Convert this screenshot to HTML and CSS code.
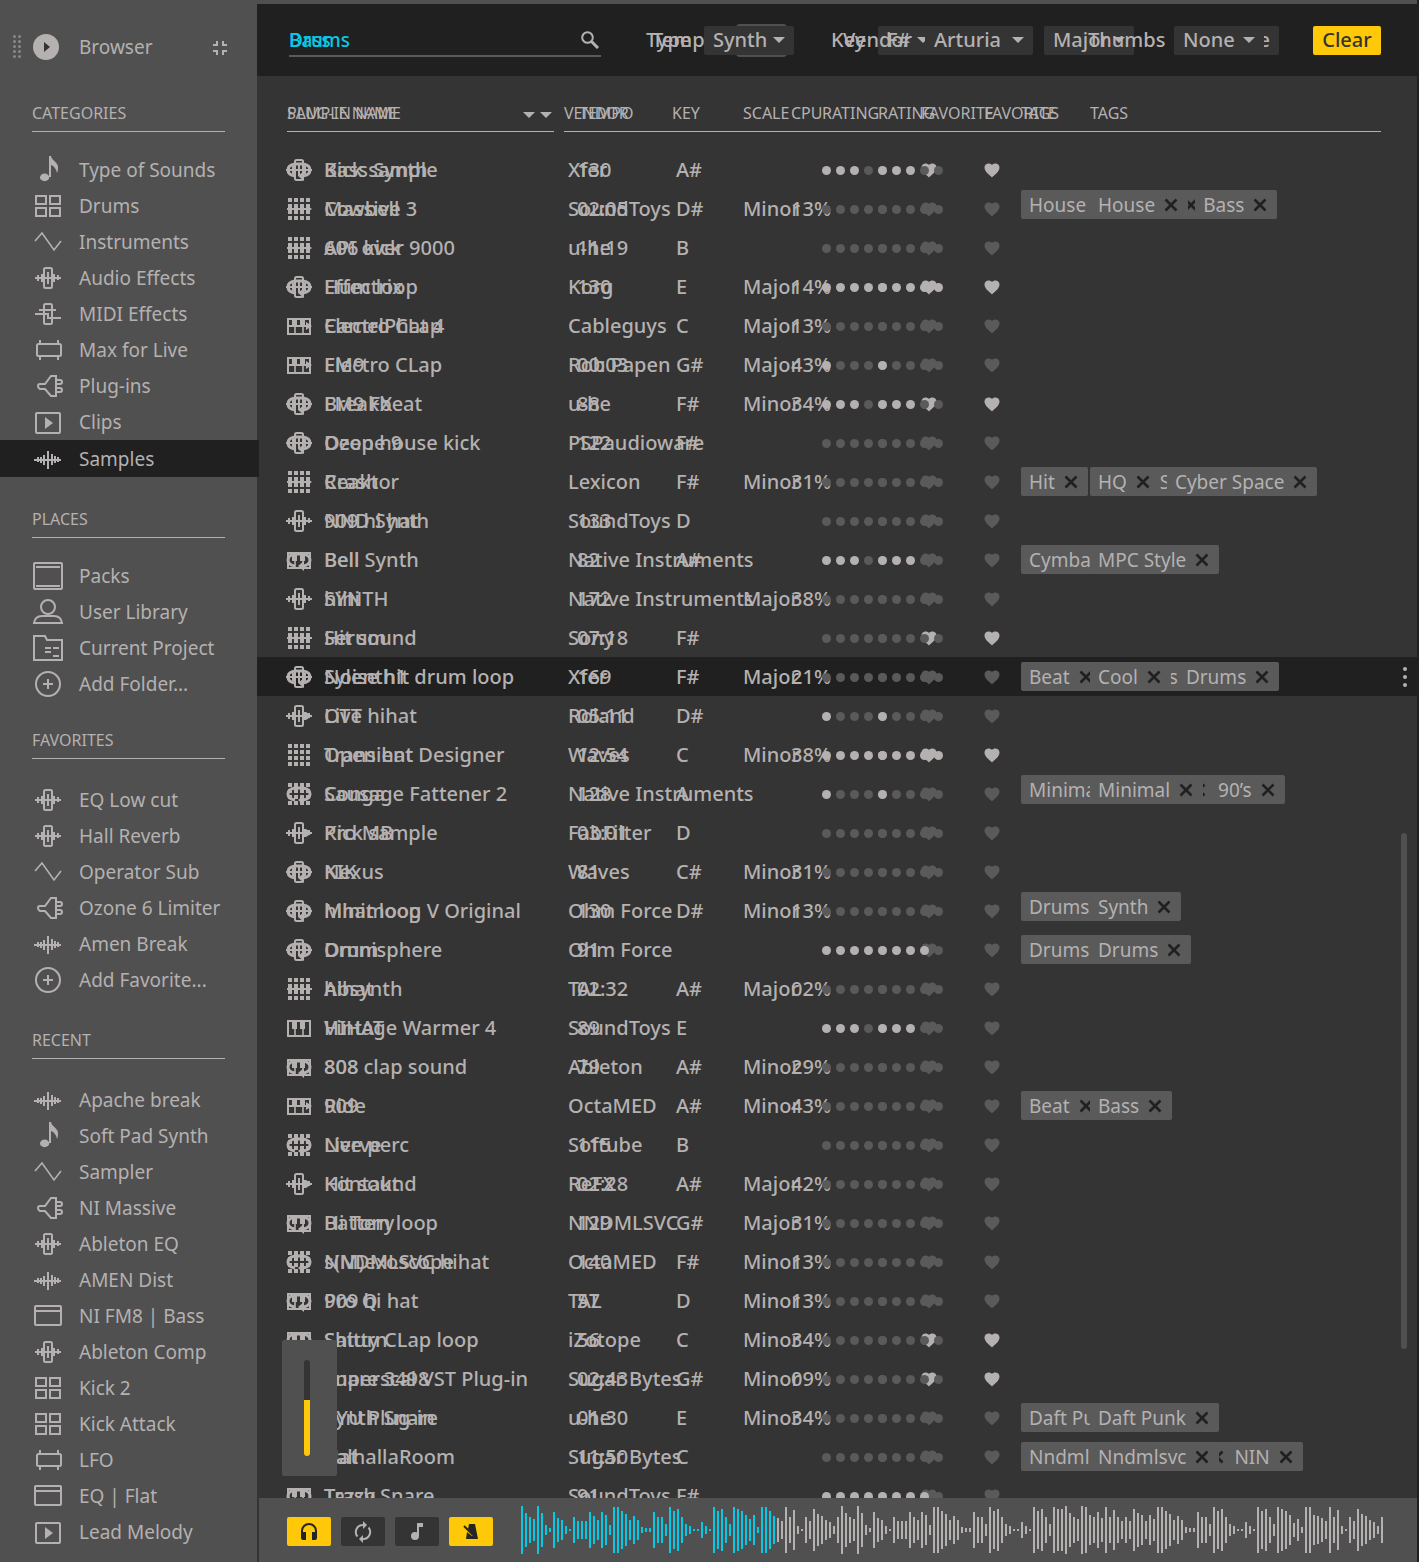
FILE: index.html
```html
<!DOCTYPE html>
<html lang="en">
<head>
<meta charset="utf-8">
<meta name="viewport" content="width=device-width, initial-scale=1">
<title>Browser</title>
<link rel="stylesheet" href="styles.css">
</head>
<body>
<svg class="sprite" aria-hidden="true">
  <symbol id="i-note" viewBox="0 0 32 28"><ellipse cx="12.6" cy="21.4" rx="4.6" ry="3.8" fill="currentColor"/><path d="M17 21V0h2c1 5 7 6 7 11 0 2 0 4-1 6-.5-4-3-7-6-8v12z" fill="currentColor"/></symbol>
  <symbol id="i-pads" viewBox="0 0 32 28"><path d="M4 4h10v8H4zM18 4h10v8H18zM4 16h10v8H4zM18 16h10v8H18z" class="line"/></symbol>
  <symbol id="i-sine" viewBox="0 0 32 28"><path d="M3 13l7-8 12 17 7-9" class="line thin"/></symbol>
  <symbol id="i-fx" viewBox="0 0 32 28"><rect x="12" y="4" width="8" height="20" rx="1.5" class="line"/><path d="M3 13h26v2H3zM5 11h2v6H5zM9 10h2v8H9zM15 8h2v12h-2zM21 10h2v8h-2zM25 11h2v5h-2z" fill="currentColor"/></symbol>
  <symbol id="i-midi" viewBox="0 0 32 28"><rect x="12" y="4" width="8" height="20" rx="1.5" class="line"/><path d="M7 10h17M3 14h13v4h13" class="line"/></symbol>
  <symbol id="i-max" viewBox="0 0 32 28"><rect x="5" y="8" width="24" height="12" rx="1.5" class="line"/><path d="M8 4v4M26 4v4M8 20v4M26 20v4" class="line"/></symbol>
  <symbol id="i-plug" viewBox="0 0 32 28"><path d="M24 4v20h-5l-6-7H8q-2-1-2-3t2-2h5l6-8zM24 8h4q2 0 2 2t-2 2h-4M24 16h4q2 0 2 2t-2 2h-4" class="line"/></symbol>
  <symbol id="i-clip" viewBox="0 0 32 28"><rect x="4" y="5" width="24" height="20" rx="1" class="line"/><path d="M13 9l8 6-8 6z" fill="currentColor"/></symbol>
  <symbol id="i-wave" viewBox="0 0 32 28"><path d="M2 14h27v2H2zM5 12h2v5H5zM8 12h2v6H8zM11 10h2v10h-2zM15 6h2v18h-2zM19 9h2v11h-2zM22 11h2v7h-2zM25 12h2v5h-2z" fill="currentColor"/></symbol>
  <symbol id="i-pack" viewBox="0 0 32 28"><rect x="2" y="1" width="28" height="26" rx="1" class="line"/><path d="M4 5h24M4 24h24" class="line"/></symbol>
  <symbol id="i-user" viewBox="0 0 32 28"><circle cx="16" cy="9" r="7" class="line"/><path d="M2 25q1-7 8-7h12q7 0 8 7z" class="line"/></symbol>
  <symbol id="i-folder" viewBox="0 0 32 28"><path d="M2 2h11l2 4h15v20H2z" class="line"/><path d="M13 14h6M21 14h6M13 18h6M21 22h6" class="line"/></symbol>
  <symbol id="i-add" viewBox="0 0 32 28"><circle cx="16" cy="14" r="12" class="line"/><path d="M16 9v10M11 14h10" class="line"/></symbol>
  <symbol id="i-window" viewBox="0 0 32 28"><rect x="3" y="4" width="26" height="19" rx="1" class="line"/><path d="M3 9h26" class="line"/></symbol>
  <symbol id="i-grid" viewBox="0 0 32 28"><path d="M5 3h4v4H5zM11 3h4v4h-4zM17 3h4v4h-4zM23 3h4v4h-4zM5 9h4v4H5zM11 9h4v4h-4zM17 9h4v4h-4zM23 9h4v4h-4zM5 15h4v4H5zM11 15h4v4h-4zM17 15h4v4h-4zM23 15h4v4h-4zM5 21h4v4H5zM11 21h4v4h-4zM17 21h4v4h-4zM23 21h4v4h-4z" fill="currentColor"/></symbol>
  <symbol id="i-keys" viewBox="0 0 32 28"><rect x="5" y="7" width="22" height="15" class="line"/><path d="M12 7v15M20 7v15" class="line thin"/><path d="M9 7h5v8H9zM17 7h5v8h-5z" fill="currentColor"/></symbol>
  <symbol id="i-loop" viewBox="0 0 32 28"><path d="M12 20q-7-1-7-6t7-6h8q7 1 7 6t-7 6h-1" class="line heavy"/><path d="M15 20l6-5v10z" fill="currentColor"/></symbol>
  <symbol id="i-shot" viewBox="0 0 32 28"><path d="M4 13h19v-3l6 4-6 4v-3H4z" fill="currentColor"/></symbol>
  <symbol id="i-burst" viewBox="0 0 32 28"><path d="M4 13h25v2H4zM6 10h2v8H6zM12 9h2v10h-2zM18 9h2v10h-2zM24 10h2v8h-2z" fill="currentColor"/></symbol>
  <symbol id="i-heart" viewBox="0 0 16 15"><path d="M8 14.500C5 11.500.5 8.500.5 4.500.5 0 6-.5 8 2c2-2.500 7.500-2 7.500 2.500 0 4-4.500 7-7.500 10z" fill="currentColor"/></symbol>
  <symbol id="i-x" viewBox="0 0 14 14"><path d="M1.500 1.500l11 11M12.500 1.500l-11 11" fill="none" stroke="currentColor" stroke-width="2.600"/></symbol>
</svg>

<div class="app">
  <nav class="sidebar" aria-label="Browser">
    <header class="sidebar-head">
      <svg class="grip" viewBox="0 0 8 24" aria-hidden="true"><path d="M1.500 1.500v22M6.500 1.500v22" fill="none" stroke="currentColor" stroke-width="3" stroke-linecap="round" stroke-dasharray="0 5"/></svg>
      <svg class="logo" viewBox="0 0 26 26" aria-hidden="true"><circle cx="13" cy="13" r="13" fill="currentColor"/><path d="M11 8l6 5-6 5z" fill="#343434"/></svg>
      <h1>Browser</h1>
      <button class="collapse" aria-label="Collapse"><svg viewBox="0 0 14 14"><path d="M0 4h4V0M10 0v4h4M0 10h4v4M14 10h-4v4" fill="none" stroke="currentColor" stroke-width="2"/></svg></button>
    </header>

    <section class="nav-group">
      <h2>CATEGORIES</h2>
      <ul>
        <li><a href="#"><svg><use href="#i-note"/></svg>Type of Sounds</a></li>
        <li><a href="#"><svg><use href="#i-pads"/></svg>Drums</a></li>
        <li><a href="#"><svg><use href="#i-sine"/></svg>Instruments</a></li>
        <li><a href="#"><svg><use href="#i-fx"/></svg>Audio Effects</a></li>
        <li><a href="#"><svg><use href="#i-midi"/></svg>MIDI Effects</a></li>
        <li><a href="#"><svg><use href="#i-max"/></svg>Max for Live</a></li>
        <li><a href="#"><svg><use href="#i-plug"/></svg>Plug-ins</a></li>
        <li><a href="#"><svg><use href="#i-clip"/></svg>Clips</a></li>
        <li><a href="#" class="active" aria-current="page"><svg><use href="#i-wave"/></svg>Samples</a></li>
      </ul>
    </section>

    <section class="nav-group">
      <h2>PLACES</h2>
      <ul>
        <li><a href="#"><svg><use href="#i-pack"/></svg>Packs</a></li>
        <li><a href="#"><svg><use href="#i-user"/></svg>User Library</a></li>
        <li><a href="#"><svg><use href="#i-folder"/></svg>Current Project</a></li>
        <li><a href="#"><svg><use href="#i-add"/></svg>Add Folder...</a></li>
      </ul>
    </section>

    <section class="nav-group loose close">
      <h2>FAVORITES</h2>
      <ul>
        <li><a href="#"><svg><use href="#i-fx"/></svg>EQ Low cut</a></li>
        <li><a href="#"><svg><use href="#i-fx"/></svg>Hall Reverb</a></li>
        <li><a href="#"><svg><use href="#i-sine"/></svg>Operator Sub</a></li>
        <li><a href="#"><svg><use href="#i-plug"/></svg>Ozone 6 Limiter</a></li>
        <li><a href="#"><svg><use href="#i-wave"/></svg>Amen Break</a></li>
        <li><a href="#"><svg><use href="#i-add"/></svg>Add Favorite...</a></li>
      </ul>
    </section>

    <section class="nav-group loose">
      <h2>RECENT</h2>
      <ul>
        <li><a href="#"><svg><use href="#i-wave"/></svg>Apache break</a></li>
        <li><a href="#"><svg><use href="#i-note"/></svg>Soft Pad Synth</a></li>
        <li><a href="#"><svg><use href="#i-sine"/></svg>Sampler</a></li>
        <li><a href="#"><svg><use href="#i-plug"/></svg>NI Massive</a></li>
        <li><a href="#"><svg><use href="#i-fx"/></svg>Ableton EQ</a></li>
        <li><a href="#"><svg><use href="#i-wave"/></svg>AMEN Dist</a></li>
        <li><a href="#"><svg><use href="#i-window"/></svg>NI FM8 | Bass</a></li>
        <li><a href="#"><svg><use href="#i-fx"/></svg>Ableton Comp</a></li>
        <li><a href="#"><svg><use href="#i-pads"/></svg>Kick 2</a></li>
        <li><a href="#"><svg><use href="#i-pads"/></svg>Kick Attack</a></li>
        <li><a href="#"><svg><use href="#i-max"/></svg>LFO</a></li>
        <li><a href="#"><svg><use href="#i-window"/></svg>EQ | Flat</a></li>
        <li><a href="#"><svg><use href="#i-clip"/></svg>Lead Melody</a></li>
      </ul>
    </section>
  </nav>

  <main class="main">
    <div class="filters">
      <form class="filter-layer">
        <div class="search"><input type="text" value="Drums" aria-label="Search samples"></div>
        <div class="fields sample-fields">
          <label for="tempo">Tempo</label>
          <input id="tempo" class="tempo" type="text">
          <label for="key">Key</label>
          <span class="pick key"><select id="key"><option>F#</option></select></span>
          <span class="pick"><select aria-label="Scale"><option>Major</option></select></span>
          <button type="button" class="favorite">Favorite</button>
        </div>
      </form>
      <form class="filter-layer">
        <div class="search"><input type="text" value="Bass" aria-label="Search plug-ins">
          <svg viewBox="0 0 18 18" aria-hidden="true"><circle cx="6.500" cy="6.500" r="5.300" fill="none" stroke="currentColor" stroke-width="2"/><path d="M10.500 10.500l6.500 6.500" stroke="currentColor" stroke-width="3"/></svg></div>
        <div class="fields plugin-fields">
          <label for="type">Type</label>
          <span class="pick"><select id="type"><option>Synth</option></select></span>
          <label for="vendor">Vendor</label>
          <span class="pick vendor"><select id="vendor"><option>Arturia</option></select></span>
          <label for="thumbs">Thumbs</label>
          <span class="pick"><select id="thumbs"><option>None</option></select></span>
          <button type="reset" class="clear">Clear</button>
        </div>
      </form>
    </div>

    <div class="results">
      <table class="plugins">
        <colgroup><col class="w-name"><col class="w-vendor"><col class="w-cpu"><col class="w-rating"><col class="w-fav"><col><col class="w-menu"></colgroup>
        <thead><tr><th class="name"><span>PLUG-IN NAME</span></th><th><span>VENDOR</span></th><th><span>CPU</span></th><th><span>RATING</span></th><th><span>FAVORITE</span></th><th><span>TAGS</span></th><th></th></tr></thead>
        <tbody id="plugin-rows"></tbody>
      </table>
      <table class="samples">
        <colgroup><col class="w-name"><col class="w-tempo"><col class="w-key"><col class="w-scale"><col class="w-rating-s"><col class="w-fav-s"><col><col class="w-menu"></colgroup>
        <thead><tr><th class="name"><span>SAMPLE NAME</span></th><th class="tempo-head"><span>TEMPO</span></th><th><span>KEY</span></th><th><span>SCALE</span></th><th><span>RATING</span></th><th><span>FAVORITE</span></th><th><span>TAGS</span></th><th></th></tr></thead>
        <tbody id="sample-rows"></tbody>
      </table>
      <div class="scroll-thumb"></div>
      <div class="volume"><input type="range" min="0" max="100" value="58" aria-label="Volume"></div>
    </div>

    <footer class="player">
      <div class="modes">
        <button class="on" aria-label="Preview"><svg viewBox="0 0 20 20"><path d="M3 11V9a7 7 0 0 1 14 0v2" fill="none" stroke="currentColor" stroke-width="2"/><path d="M2 10h5v8H4q-2 0-2-2zM13 10h5v6q0 2-2 2h-3z" fill="currentColor"/></svg></button>
        <button aria-label="Loop"><svg viewBox="0 0 20 20"><path d="M4.500 14.500A7 7 0 0 1 10 3M15.500 5.500A7 7 0 0 1 10 17" fill="none" stroke="currentColor" stroke-width="2"/><path d="M10-1v8l4-4zM10 13v8l-4-4z" fill="currentColor"/></svg></button>
        <button aria-label="Key sync"><svg viewBox="0 0 20 20"><circle cx="8" cy="14" r="4" fill="currentColor"/><path d="M10 14V1h6v4h-4v9z" fill="currentColor"/></svg></button>
        <button class="on" aria-label="Metronome"><svg viewBox="0 0 20 20"><path d="M8 2h6l3 15H5l1-7 5 4 1-1-5-6z" fill="currentColor"/><path d="M3 4l9 9" stroke="currentColor" stroke-width="2"/></svg></button>
      </div>
      <div class="waveform" id="waveform" aria-hidden="true"></div>
    </footer>
  </main>
</div>
<script src="app.js"></script>
</body>
</html>
```
FILE: styles.css
```css
* { box-sizing: border-box; }

:root {
  --panel: #505050;
  --body: #343434;
  --dark: #202020;
  --ink: #b5b1b1;
  --dim: #5a5a5a;
  --accent: #ffc808;
  --cyan: #08c8e4;
}

body {
  margin: 0;
  background: var(--dark);
  color: var(--ink);
  font: 400 19px/24px "Noto Sans", sans-serif;
}

h1, h2, ul { margin: 0; padding: 0; font-size: inherit; font-weight: 400; list-style: none; }
a { color: inherit; text-decoration: none; }
button, input, select { font: inherit; color: inherit; border: 0; padding: 0; margin: 0; background: none; appearance: none; }
svg { display: block; flex: none; }
.sprite { position: absolute; width: 0; height: 0; }
.line { fill: none; stroke: currentColor; stroke-width: 2; }
.thin { stroke-width: 1.6; }
.heavy { stroke-width: 3; }

.app {
  display: grid;
  grid-template-columns: 257px minmax(0, 1fr);
  grid-template-rows: minmax(0, 1fr);
  height: 100vh;
  overflow: hidden;
  padding-right: 2px;
}

/* sidebar */
.sidebar { position: relative; z-index: 1; background: var(--panel); }
.sidebar-head { display: flex; align-items: center; height: 101px; padding: 0 30px 8px 13px; }
.grip { width: 8px; height: 24px; margin-right: 12px; color: #8a8888; }
.logo { width: 26px; height: 26px; margin-right: 20px; }
.collapse { margin: 3px 0 0 auto; }
.collapse svg { width: 14px; height: 14px; }
.nav-group + .nav-group { margin-top: 30px; }
.nav-group + .nav-group.close { margin-top: 26px; }
.nav-group h2 { margin: 0 32px 20px; padding-bottom: 6px; border-bottom: 1px solid var(--ink); font-size: 16px; }
.nav-group.loose h2 { margin-bottom: 23px; }
.nav-group a { display: flex; align-items: center; gap: 15px; height: 36px; padding-left: 32px; white-space: nowrap; }
.nav-group a svg { width: 32px; height: 28px; }
.nav-group a.active { height: 37px; margin-right: -2px; background: var(--dark); }

/* main column */
.main { display: grid; grid-template-rows: 76px minmax(0, 1fr) 64px; background: var(--body); }

/* filters */
.filters { display: grid; border-top: 4px solid var(--panel); background: var(--dark); font-weight: 500; }
.filter-layer { grid-area: 1 / 1; display: flex; align-items: center; padding: 0 36px 0 32px; }
.search { flex: 1; display: flex; align-items: center; height: 32px; border-bottom: 2px solid var(--dim); margin-top: 2px; }
.search input { flex: 1; min-width: 0; color: var(--cyan); }
.search svg { width: 18px; height: 18px; margin-right: 2px; }
.fields { display: grid; align-items: center; justify-items: start; font-size: 20px; }
.sample-fields { grid-template-columns: 84px 95px 47px 166px 130px 207px; margin-left: 51px; }
.plugin-fields { grid-template-columns: 58px 139px 82px 163px 86px 139px 68px; margin-left: 45px; }
.pick { display: grid; align-items: center; width: 90px; height: 29px; border-radius: 2px; background: var(--body); }
.pick > select, .pick::after { grid-area: 1 / 1; }
.pick > select { width: 100%; height: 29px; padding-left: 9px; }
.pick::after, .name span::after {
  content: "";
  justify-self: end;
  border: 6px solid transparent;
  border-top-color: currentColor;
  border-bottom: 0;
}
.pick::after { margin-right: 9px; pointer-events: none; }
.pick.key { width: 60px; }
.pick.vendor { width: 108px; }
.tempo { width: 51px; height: 33px; border: 2px solid var(--panel); border-radius: 4px; }
.favorite { width: 105px; height: 29px; padding-right: 9px; border-radius: 2px; background: var(--body); text-align: right; }
.clear { width: 68px; height: 29px; border-radius: 2px; background: var(--accent); color: #343434; }

/* result tables: both result sets share one area */
.results { position: relative; display: grid; align-items: start; overflow: hidden; padding-top: 25px; }
.results table { grid-area: 1 / 1; width: 100%; table-layout: fixed; border-spacing: 0; font-size: 20px; font-weight: 500; }
.w-name { width: 307px; }
.w-vendor { width: 227px; }
.w-cpu { width: 31px; }
.w-rating { width: 99px; }
.w-fav { width: 100px; }
.w-tempo { width: 108px; }
.w-key { width: 71px; }
.w-scale { width: 135px; }
.w-rating-s { width: 106px; }
.w-fav-s { width: 106px; }
.w-menu { width: 36px; }
th { padding: 0 0 18px; font-weight: 400; font-size: 16px; text-align: left; white-space: nowrap; }
th span { display: block; height: 31px; border-bottom: 1px solid var(--ink); }
th.name span { display: flex; justify-content: space-between; align-items: center; margin: 0 10px 0 30px; padding-bottom: 6px; }
.name span::after { margin-top: 3px; }
.samples th.name span { padding-right: 2px; }
.plugins th.name span { padding-right: 19px; }
.tempo-head span { padding-left: 15px; }
td { height: 39px; padding: 0 0 0 4px; white-space: nowrap; }
td.title { padding-left: 26px; }
td.tempo-cell { padding-left: 13px; }
td.flush { padding-left: 0; }
.title div { display: flex; align-items: center; gap: 9px; }
.title svg { width: 32px; height: 28px; }
.title i { width: 32px; }
.selected td { background: var(--dark); }

.dots { display: flex; gap: 5px; padding-top: 2px; }
.dots i { width: 9px; height: 9px; border-radius: 50%; background: var(--dim); }
.dots i.lit { background: var(--ink); }
.heart { display: block; padding-top: 2px; color: var(--dim); }
.heart.lit { color: var(--ink); }
.heart svg { width: 16px; height: 15px; }

.tags { display: flex; gap: 7px; font-size: 19px; font-weight: 400; }
.tags.raised { padding-bottom: 8px; }
.tag { display: flex; align-items: center; gap: 8px; height: 29px; padding: 0 9px 0 8px; border-radius: 2px; background: var(--dim); }
.tag button { color: var(--dark); }
.tag svg { width: 16px; height: 14px; }
.menu { display: grid; gap: 4px; margin-left: 18px; padding: 4px; }
.menu i { width: 4px; height: 4px; border-radius: 50%; background: var(--ink); }

.scroll-thumb { position: absolute; top: 53.2%; right: 10px; width: 6px; height: 36.3%; border-radius: 3px; background: var(--panel); }
.volume { position: absolute; left: 25px; bottom: 22px; width: 55px; height: 136px; padding: 20px 0 0 22px; border-radius: 2px; background: var(--panel); }
.volume input {
  display: block;
  writing-mode: vertical-lr;
  direction: rtl;
  width: 6px;
  height: 96px;
  border-radius: 3px;
  background: linear-gradient(to top, var(--accent) 58%, var(--body) 58%);
}
.volume input::-webkit-slider-thumb { appearance: none; width: 0; height: 0; }

/* player */
.player { display: flex; align-items: center; gap: 28px; margin-left: 2px; padding: 0 34px 0 28px; background: var(--panel); }
.modes { display: flex; gap: 10px; padding-top: 3px; }
.modes button { display: grid; place-items: center; width: 44px; height: 29px; border-radius: 2px; background: var(--body); }
.modes button.on { background: var(--accent); color: #252525; }
.modes svg { width: 20px; height: 20px; overflow: visible; }
.waveform { flex: 1; display: flex; align-items: center; justify-content: space-between; height: 48px; }
.waveform i { width: 2px; background: var(--ink); }
.waveform i.played { background: var(--cyan); }
```
FILE: app.js
```js
// name, icon, vendor, cpu, tags | name, icon, tempo, key, scale, tags | rating, favorite
const rows = [
  ["Bass Synth", "fx", "Xfer", "", "", "Kick sample", "loop", "130", "A#", "", "", 3, 1],
  ["Massive 3", "grid", "SoundToys", "13%", "House,Bass", "Cowbell", "shot", "02:05", "D#", "Minor", "House,Bass", 0, 0, "raised"],
  ["API over 9000", "grid", "u-he", "", "", "606 kick", "shot", "11:19", "B", "", "", 0, 0],
  ["Effectrix", "fx", "Korg", "14%", "", "Hum loop", "loop", "130", "E", "Major", "", 5, 1],
  ["CamelPhat 4", "keys", "Cableguys", "13%", "", "Electro CLap", "shot", "", "C", "Major", "", 0, 0],
  ["FM9", "keys", "Rob Papen", "43%", "", "Electro CLap", "shot", "00:03", "G#", "Major", "", 1, 0],
  ["FM9 FX", "fx", "u-he", "34%", "", "Breakbeat", "loop", "88", "F#", "Minor", "", 3, 1],
  ["Ozone 9", "fx", "PSPaudioware", "", "", "Deep house kick", "loop", "122", "F#", "", "", 0, 0],
  ["Reaktor", "grid", "Lexicon", "31%", "Hit,Cyber Space", "Crash", "shot", "", "F#", "Minor", "HQ,Cyber Space", 0, 0],
  ["NND Synth", "fx", "SoundToys", "", "", "909 hi hat", "", "133", "D", "", "", 0, 0],
  ["Bell Synth", "keys", "Native Instruments", "", "Cymbal", "Bell", "loop", "82", "A#", "", "MPC Style", 3, 0],
  ["SYNTH", "fx", "Native Instruments", "38%", "", "hihi", "", "172", "", "Major", "", 0, 0],
  ["Serum", "grid", "Sony", "", "", "Hit sound", "burst", "07:18", "F#", "", "", 0, 1],
  ["Sylenth1", "fx", "Xfer", "21%", "Beat,Drums", "Noise hit drum loop", "loop", "169", "F#", "Major", "Cool,Drums", 0, 0],
  ["OTT", "fx", "Roland", "", "", "Live hihat", "shot", "05:11", "D#", "", "", 1, 0],
  ["Transient Designer", "grid", "Waves", "38%", "", "Open hat", "", "12:54", "C", "Minor", "", 5, 1],
  ["Sausage Fattener 2", "grid", "Native Instruments", "", "Minimal,90’s", "Conga", "loop", "128", "A", "", "Minimal,90’s", 1, 0, "raised"],
  ["Pro MB", "fx", "FabFilter", "", "", "Kick sample", "shot", "03:01", "D", "", "", 0, 0],
  ["Nexus", "fx", "Waves", "31%", "", "KIK", "loop", "81", "C#", "Minor", "", 0, 0],
  ["Minimoog V Original", "fx", "Ohm Force", "13%", "Drums", "hihat loop", "loop", "130", "D#", "Minor", "Synth", 0, 0, "raised"],
  ["Omnisphere", "fx", "Ohm Force", "", "Drums", "Drum", "loop", "91", "", "", "Drums", 4, 0],
  ["Absynth", "grid", "TAL", "02%", "", "hihat", "burst", "02:32", "A#", "Major", "", 0, 0],
  ["Vintage Warmer 4", "keys", "SoundToys", "", "", "HIHAT", "", "89", "E", "", "", 3, 0],
  ["808", "keys", "Ableton", "29%", "", "808 clap sound", "loop", "79", "A#", "Minor", "", 0, 0],
  ["909", "keys", "OctaMED", "43%", "Beat", "Ride", "shot", "", "A#", "Minor", "Bass", 0, 0],
  ["Nerve", "grid", "Softube", "", "", "Live perc", "loop", "115", "B", "", "", 0, 0],
  ["Kontakt", "fx", "ReFX", "42%", "", "Hit sound", "shot", "02:28", "A#", "Major", "", 0, 0],
  ["Battery", "keys", "NNDMLSVC", "31%", "", "Hi Tom loop", "loop", "129", "G#", "Major", "", 0, 0],
  ["s(M)exoscope", "grid", "OctaMED", "13%", "", "NNDMLSVC hihat", "loop", "140", "F#", "Minor", "", 0, 0],
  ["Pro Q", "keys", "TAL", "13%", "", "909 hi hat", "loop", "57", "D", "Minor", "", 0, 0],
  ["Saturn", "keys", "iZotope", "34%", "", "Shitty CLap loop", "loop", "56", "C", "Minor", "", 0, 1],
  ["Superscal VST Plug-in", "keys", "Sugar Bytes", "09%", "", "Snare 3498", "loop", "02:43", "G#", "Minor", "", 0, 1],
  ["XYU Plug-in", "keys", "u-he", "34%", "Daft Punk", "Synth Snare", "loop", "01:30", "E", "Minor", "Daft Punk", 0, 0],
  ["ValhallaRoom", "keys", "Sugar Bytes", "", "Nndmlsvc,NIN", "Hat", "loop", "11:50", "C", "", "Nndmlsvc,NIN", 0, 0],
  ["Trash", "keys", "SoundToys", "", "", "Tazzy Snare", "loop", "91", "F#", "", "", 4, 0]
];

const icon = id => id ? `<svg aria-hidden="true"><use href="#i-${id}"/></svg>` : "<i></i>";
const title = (name, id) => `<td class="title"><div>${icon(id)}${name}</div></td>`;
const dots = n => `<td class="flush"><div class="dots">${[1, 2, 3, 4, 5].map(i => `<i class="${i <= n ? "lit" : ""}"></i>`).join("")}</div></td>`;
const heart = on => `<td class="flush"><button class="heart ${on ? "lit" : ""}" aria-label="Favorite">${icon("heart")}</button></td>`;
const tags = (list, mod = "") => `<td class="flush"><div class="tags ${mod}">${list.split(",").filter(Boolean).map(t => `<span class="tag">${t}<button aria-label="Remove ${t}">${icon("x")}</button></span>`).join("")}</div></td>`;
const menu = '<td class="flush"><button class="menu" aria-label="More"><i></i><i></i><i></i></button></td>';

let plugins = "", samples = "";
rows.forEach(([pName, pIcon, vendor, cpu, pTags, sName, sIcon, tempo, key, scale, sTags, rating, fav, mod], i) => {
  const selected = i === 13;
  plugins += `<tr class="${selected ? "selected" : ""}">${title(pName, pIcon)}<td>${vendor}</td><td class="flush">${cpu}</td>${dots(rating)}${heart(fav)}${tags(pTags, mod)}${selected ? menu : "<td></td>"}</tr>`;
  samples += `<tr>${title(sName, sIcon)}<td class="tempo-cell">${tempo}</td><td>${key}</td><td class="flush">${scale}</td>${dots(rating)}${heart(fav)}${tags(sTags, mod)}<td></td></tr>`;
});
document.getElementById("plugin-rows").innerHTML = plugins;
document.getElementById("sample-rows").innerHTML = samples;

// peak levels, drawn relative to the loudest one
const peaks = [
  53, 38, 29, 25, 53, 38, 11, 5, 40, 27, 22, 9, 2, 29, 20, 20, 20, 40, 31, 22, 40, 33, 11, 51, 51, 42, 35, 22, 31, 22, 7, 4, 4,
  40, 29, 29, 13, 51, 42, 46, 29, 13, 9, 2, 2, 18, 9, 2, 51, 42, 46, 29, 13, 51, 46, 42, 33, 24, 33, 7, 51, 51, 42, 31,
  27, 20, 51, 29, 44, 9, 2, 29, 20, 46, 35, 31, 22, 18, 9, 29, 53, 38, 29, 25, 53, 38, 11, 4, 40, 27, 22, 9, 2, 29, 20, 20, 20,
  40, 29, 22, 40, 33, 11, 51, 51, 42, 35, 22, 31, 22, 7, 4, 4, 40, 29, 29, 13, 51, 42, 46, 29, 13, 9, 2, 2, 18, 9, 2,
  51, 42, 46, 29, 13, 51, 46, 46, 53, 38, 29, 25, 53, 51, 33, 29, 40, 27, 51, 29, 44, 29, 20, 29, 20, 46, 38, 33, 20, 33, 24,
  51, 51, 42, 35, 22, 31, 22, 7, 4, 4, 40, 29, 29, 13, 51, 42, 46, 29, 13, 9, 2, 2, 18, 9, 2, 51, 42, 46, 29, 13,
  51, 46, 42, 33, 16, 24, 7, 51, 51, 33, 31, 27, 20, 51, 29, 44, 9, 2, 29, 20, 46, 35, 31, 22, 18, 9, 29
];
const loudest = Math.max(...peaks);
document.getElementById("waveform").innerHTML = peaks
  .map((p, i) => `<i class="${i < 64 ? "played" : ""}" style="height:${Math.round(p / loudest * 100)}%"></i>`).join("");
```
